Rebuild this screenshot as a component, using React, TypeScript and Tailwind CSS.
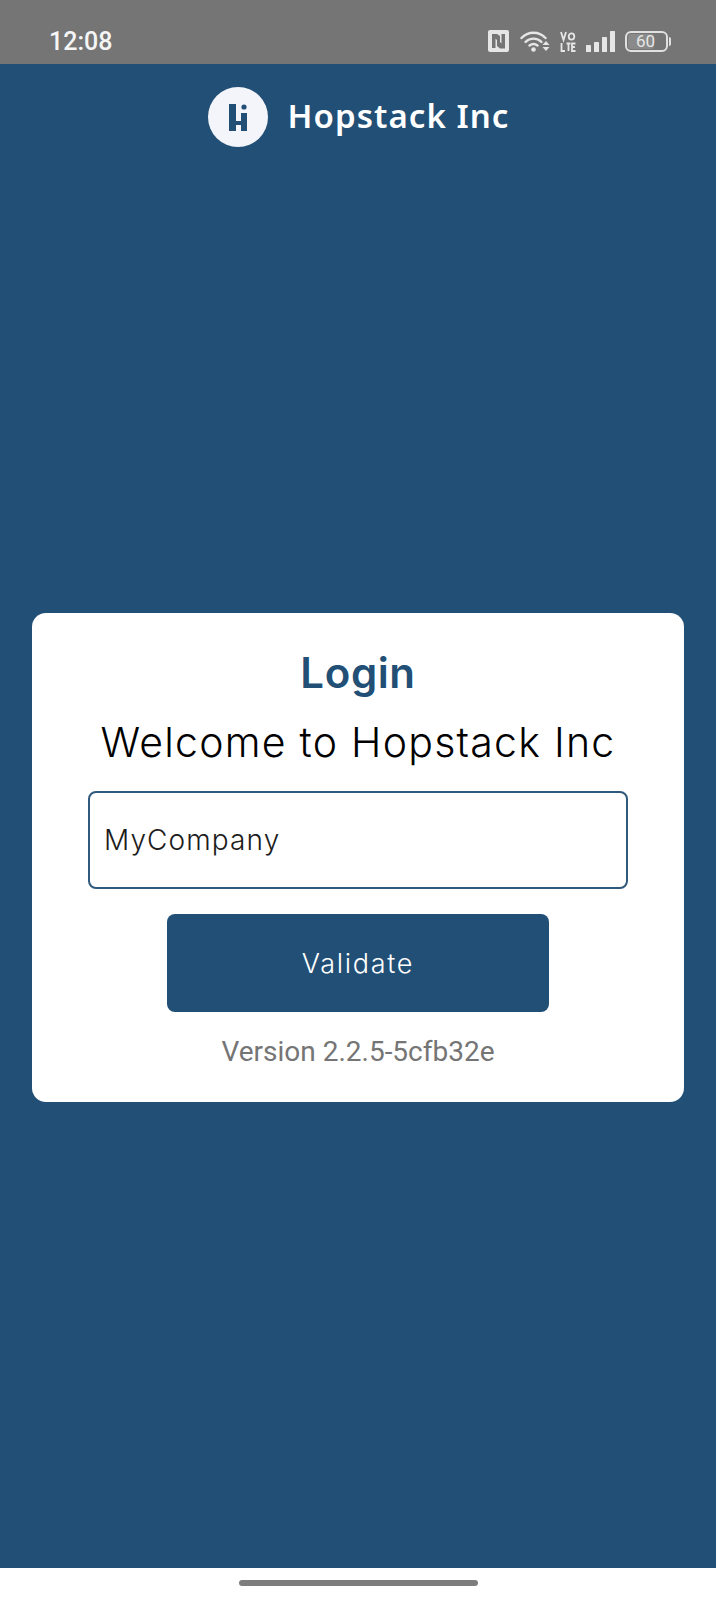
export default function App() {
  return (
    <div className="flex h-[1600px] w-[716px] flex-col overflow-hidden bg-white font-['Inter',sans-serif]">
      <div className="flex h-[64px] items-start justify-between bg-[#757575] pl-[49px] pr-[48px] pt-[27px]">
        <span className="font-['Roboto',sans-serif] text-[25px] font-medium leading-[30px] text-[#f5f5f5]">12:08</span>
        <div className="mt-[3px] flex items-center text-[#e6e6e6]">
          <svg width="21" height="22" viewBox="0 0 21 22" className="mr-[11px]">
            <path fill="currentColor" fillRule="evenodd" d="M2 0h17a2 2 0 0 1 2 2v18a2 2 0 0 1-2 2H2a2 2 0 0 1-2-2V2a2 2 0 0 1 2-2zM4 4v14h3.500V8.500l1.500 1.500v6l3 2.500H17V4h-3.500v9.500l-1.500-1.500V6L9 4z" />
          </svg>
          <svg width="30" height="22" viewBox="0 0 30 22" className="mr-[10px]">
            <g fill="none" stroke="currentColor" strokeWidth="2.400" strokeLinecap="round">
              <path d="M1.500 8C8 1 19 1 25.500 8" />
              <path d="M5.500 12C10 7.500 17 7.500 21.500 12" />
              <path d="M9.500 15.500C12 13.500 15 13.500 17.500 15.500" />
            </g>
            <circle cx="13.500" cy="19.500" r="2.300" fill="currentColor" />
            <path fill="currentColor" d="M26 11l3.500 4h-7zM22.500 17h7L26 21z" />
          </svg>
          <svg width="16" height="21" viewBox="0 0 16 21" className="mr-[10px]">
            <g fill="none" stroke="currentColor" strokeWidth="1.800">
              <path d="M1 1l2.500 8L6 1" />
              <ellipse cx="11.500" cy="5.500" rx="2.800" ry="3.200" />
              <path d="M1.500 12v8h3.500M6.500 12.500h4M8.500 12.500V20M15.500 12.500h-3.500v7.500h3.500M12 16h3" />
            </g>
          </svg>
          <svg width="29" height="21" viewBox="0 0 29 21" className="mr-[10px]">
            <g fill="currentColor">
              <rect x="0" y="14" width="5" height="7" rx="0.500" />
              <rect x="8" y="11" width="5" height="10" rx="0.500" />
              <rect x="16" y="6" width="5" height="15" rx="0.500" />
              <rect x="24" y="0" width="5" height="21" rx="0.500" />
            </g>
          </svg>
          <div className="relative flex h-[21px] w-[43px] items-center rounded-[6px] border-2 border-[#e0e0e0]">
            <div className="absolute bottom-[1px] left-[1px] top-[1px] w-[26px] rounded-[3px] bg-[#8a8a8a]" />
            <span className="relative ml-[9px] font-['Roboto',sans-serif] text-[17px] leading-none text-[#e6e6e6]">60</span>
            <div className="absolute right-[-5px] top-[4px] h-[9px] w-[2px] rounded-r-[2px] bg-[#e0e0e0]" />
          </div>
        </div>
      </div>

      <div className="flex flex-1 flex-col items-center bg-[#224f75]">
        <div className="mt-[23px] flex items-center gap-[20px] pl-[1px]">
          <svg width="60" height="60" viewBox="0 0 60 60">
            <circle cx="30" cy="30" r="30" fill="#f3f5fa" />
            <path fill="#224f75" d="M21 17h7v17h5v-8h6v18h-6v-6h-5v6h-7z" />
            <circle cx="36" cy="20" r="2.600" fill="#224f75" />
          </svg>
          <span className="-translate-y-[1px] font-['Noto_Sans',sans-serif] text-[33px] font-semibold leading-[60px] tracking-[1.050px] text-white">Hopstack Inc</span>
        </div>

        <div className="mt-[466px] flex h-[489px] w-[652px] flex-col items-center rounded-[14px] bg-white">
          <h1 className="mt-[35px] font-['Inter',sans-serif] text-[42px] font-semibold leading-[50px] tracking-[0.600px] text-[#224f75]">Login</h1>
          <h2 className="mt-[19px] font-['Inter',sans-serif] text-[41px] font-light leading-[50px] tracking-[1.250px] text-black">Welcome to Hopstack Inc</h2>
          <div className="mt-[24px] flex h-[98px] w-[540px] items-center rounded-[8px] border-2 border-[#2f5a7e] pl-[14px] font-['Inter',sans-serif] text-[28px] font-light tracking-[1.100px] text-[#1c1c1c]">MyCompany</div>
          <div className="mt-[25px] flex h-[98px] w-[382px] items-center justify-center rounded-[8px] bg-[#224f75] pt-[3px] font-['Inter',sans-serif] text-[27px] font-light tracking-[1.700px] text-white">Validate</div>
          <div className="mt-[22px] font-['Roboto',sans-serif] text-[28px] leading-[36px] text-[#757575]">Version 2.2.5-5cfb32e</div>
        </div>
      </div>

      <div className="flex h-[32px] items-start justify-center bg-white pt-[12px]">
        <div className="h-[6px] w-[239px] rounded-full bg-[#7d7d7d]" />
      </div>
    </div>
  );
}
